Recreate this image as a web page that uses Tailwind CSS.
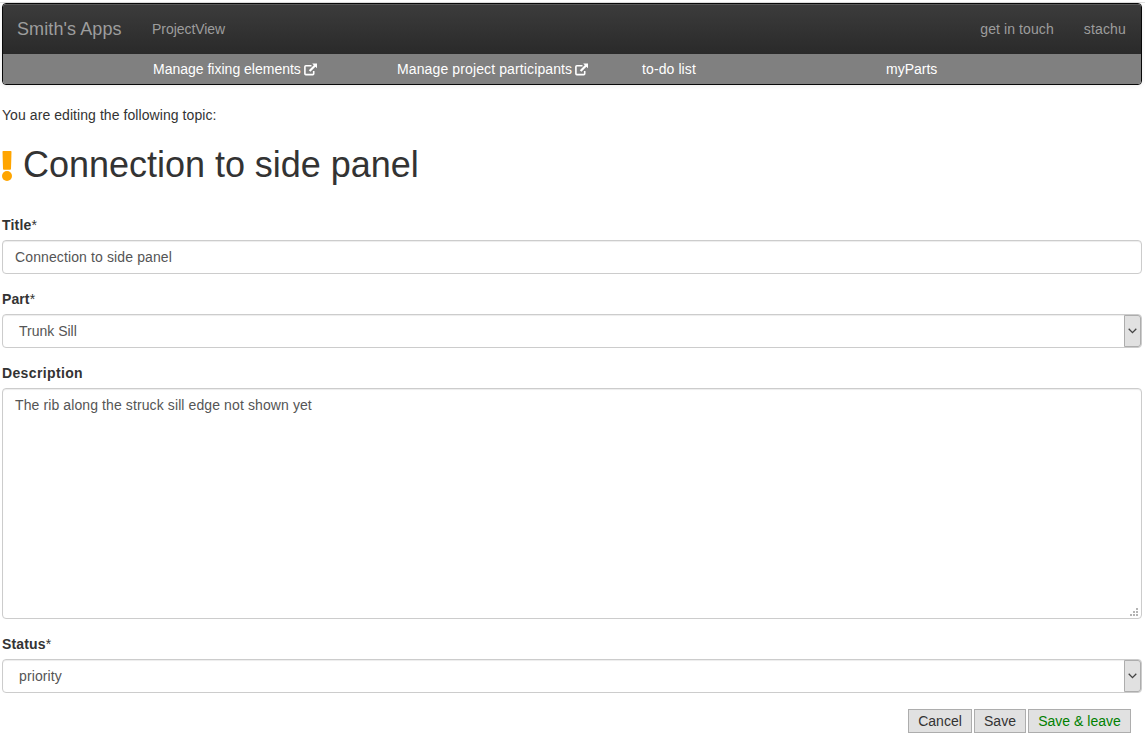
<!DOCTYPE html>
<html lang="en">
<head>
<meta charset="utf-8">
<title>Edit topic</title>
<script src="https://cdn.jsdelivr.net/npm/@tailwindcss/browser@4"></script>
</head>
<body class="bg-white text-[#333] text-[14px] leading-5 font-['Liberation_Sans',Arial,sans-serif] h-[754px] overflow-hidden">
<div class="h-[3px] border-b border-[#e0e0e0]"></div>
<div class="ml-[2px] w-[1140px]">
  <nav class="h-[82px] rounded border border-[#080808] overflow-hidden shadow-[0_1px_5px_rgba(0,0,0,0.075)] flex flex-col">
    <div class="h-[50px] bg-linear-to-b from-[#3c3c3c] to-[#2a2a2a] flex items-center pl-[14px] pr-[15px] text-[#9d9d9d] shadow-[inset_0_1px_0_rgba(255,255,255,0.15)]">
      <a class="text-[18px] w-[135px] whitespace-nowrap tracking-[0.1px]">Smith's Apps</a>
      <a class="tracking-[-0.05px]">ProjectView</a>
      <a class="ml-auto mr-[30px] tracking-[0.1px]">get in touch</a>
      <a class="tracking-[0.15px]">stachu</a>
    </div>
    <div class="h-[30px] bg-[#808080] text-white pl-[150px] grid grid-cols-[244px_245px_244px_1fr] items-center whitespace-nowrap">
      <a class="flex items-center">Manage fixing elements
        <svg class="ml-[3px] mt-[2px] w-[14px] h-[14px]" viewBox="0 0 14 14"><path fill="none" stroke="#fff" stroke-width="1.6" d="M7.5 2.8H1.8Q.9 2.8 .9 3.7V10.7Q.9 11.6 1.8 11.6H8.8Q9.7 11.6 9.7 10.7V8"/><path fill="#fff" d="M8.2 .5H13V5.3L11.4 3.8L6.4 8.8L4.8 7.2L9.8 2.2Z"/></svg></a>
      <a class="flex items-center tracking-[0.12px]">Manage project participants
        <svg class="ml-[3px] mt-[2px] w-[14px] h-[14px]" viewBox="0 0 14 14"><path fill="none" stroke="#fff" stroke-width="1.6" d="M7.5 2.8H1.8Q.9 2.8 .9 3.7V10.7Q.9 11.6 1.8 11.6H8.8Q9.7 11.6 9.7 10.7V8"/><path fill="#fff" d="M8.2 .5H13V5.3L11.4 3.8L6.4 8.8L4.8 7.2L9.8 2.2Z"/></svg></a>
      <a class="tracking-[0.1px]">to-do list</a>
      <a>myParts</a>
    </div>
  </nav>
  <p class="mt-5 tracking-[0.07px]">You are editing the following topic:</p>
  <h1 class="mt-5 h-10 flex items-center text-[36px] leading-10 font-normal whitespace-nowrap">
    <svg class="w-[21px] h-10 shrink-0" viewBox="0 0 21 40"><path fill="orange" d="M1.2 6H8.8Q9.5 6 9.5 6.8L9 23.8Q8.9 24.7 8.1 24.7H1.9Q1.1 24.7 1 23.8L.5 6.8Q.5 6 1.2 6Z"/><circle cx="5" cy="31" r="5" fill="orange"/></svg>
    <span class="tracking-[-0.02px]">Connection to side panel</span>
  </h1>
  <form class="mt-[30px]">
    <div class="tracking-[0.2px]"><b>Title</b>*</div>
    <div class="mt-[5px] h-[34px] rounded border border-[#ccc] shadow-[inset_0_1px_1px_rgba(0,0,0,0.075)] px-3 py-1.5 text-[#555] tracking-[0.12px]">Connection to side panel</div>
    <div class="mt-[15px] tracking-[0.1px]"><b>Part</b>*</div>
    <div class="mt-[5px] h-[34px] rounded border border-[#ccc] shadow-[inset_0_1px_1px_rgba(0,0,0,0.075)] pl-4 text-[#555] flex items-center justify-between"><span>Trunk Sill</span>
      <span class="w-[17px] h-8 bg-[#e1e1e1] border border-[#adadad] rounded-r-[3px] flex items-center justify-center"><svg class="w-[9px] h-[6px] shrink-0 mr-[1px]" viewBox="0 0 9 6"><path d="M.7 .8L4.5 4.6L8.3 .8" fill="none" stroke="#444" stroke-width="1.3"/></svg></span></div>
    <div class="mt-[15px] tracking-[0.36px]"><b>Description</b></div>
    <div class="mt-[5px] h-[231px] rounded border border-[#ccc] shadow-[inset_0_1px_1px_rgba(0,0,0,0.075)] pl-3 pt-1.5 text-[#555] flex justify-between items-start"><span class="tracking-[0.105px]">The rib along the struck sill edge not shown yet</span>
      <svg class="self-end w-[8px] h-[8px] mr-[3px] mb-[2px]" viewBox="0 0 8 8" fill="#b4b4b4"><path d="M6 0h2v2H6zM3 3h2v2H3zM6 3h2v2H6zM0 6h2v2H0zM3 6h2v2H3zM6 6h2v2H6z"/></svg></div>
    <div class="mt-[15px] tracking-[0.15px]"><b>Status</b>*</div>
    <div class="mt-[5px] h-[34px] rounded border border-[#ccc] shadow-[inset_0_1px_1px_rgba(0,0,0,0.075)] pl-4 text-[#555] flex items-center justify-between"><span class="tracking-[0.12px]">priority</span>
      <span class="w-[17px] h-8 bg-[#e1e1e1] border border-[#adadad] rounded-r-[3px] flex items-center justify-center"><svg class="w-[9px] h-[6px] shrink-0 mr-[1px]" viewBox="0 0 9 6"><path d="M.7 .8L4.5 4.6L8.3 .8" fill="none" stroke="#444" stroke-width="1.3"/></svg></span></div>
    <div class="mt-4 mr-[11px] flex justify-end gap-[2px]">
      <button type="button" class="w-16 h-6 bg-[#e1e1e1] border border-[#adadad] whitespace-nowrap">Cancel</button>
      <button type="button" class="w-[52px] h-6 bg-[#e1e1e1] border border-[#adadad] whitespace-nowrap">Save</button>
      <button type="button" class="w-[103px] h-6 bg-[#e1e1e1] border border-[#adadad] text-[green] whitespace-nowrap">Save &amp; leave</button>
    </div>
  </form>
</div>
</body>
</html>
